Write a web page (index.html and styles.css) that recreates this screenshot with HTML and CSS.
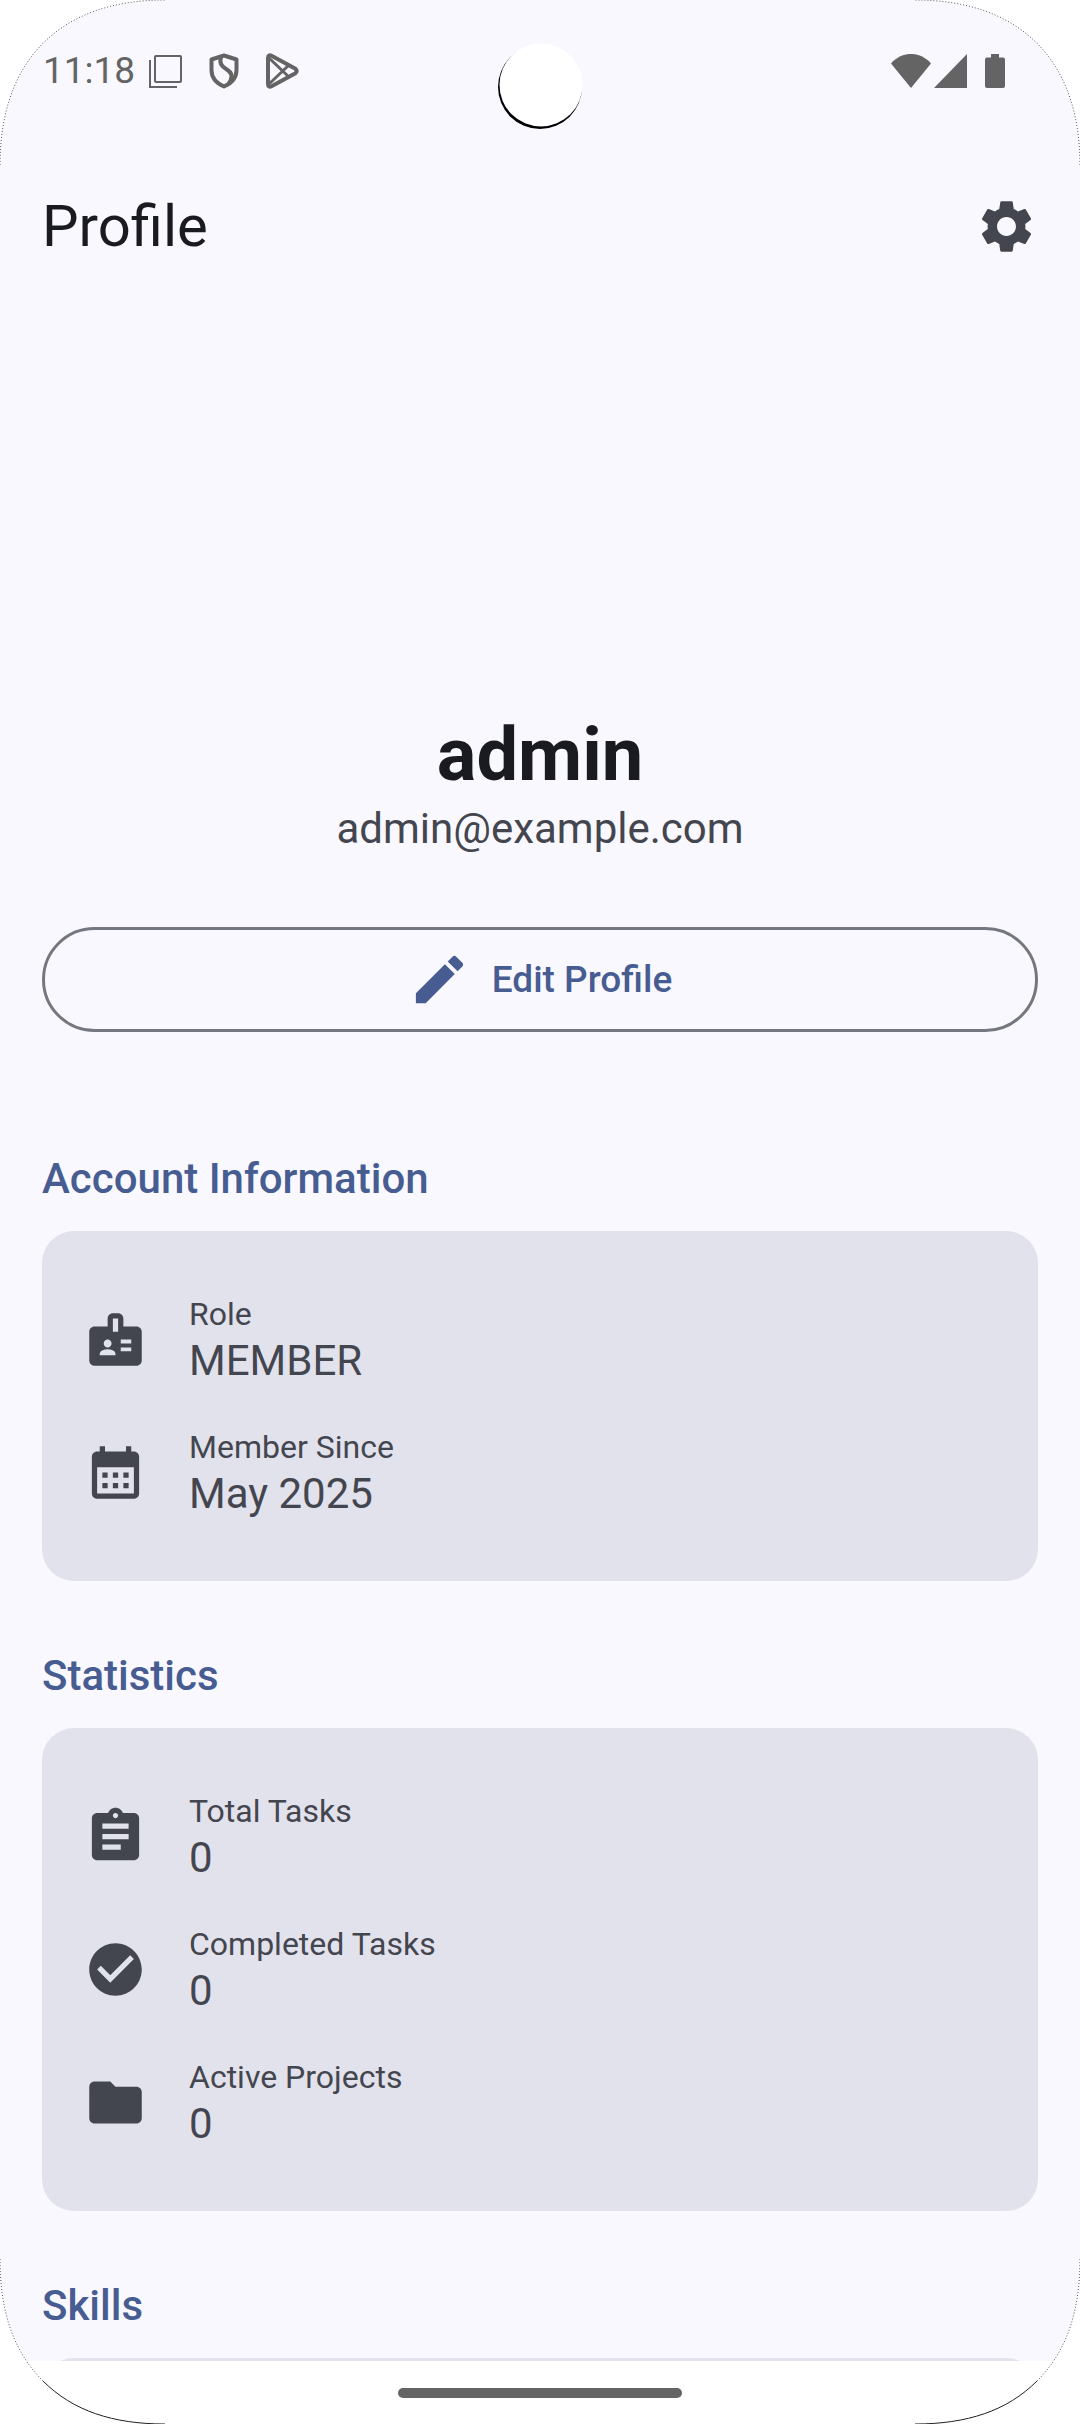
FILE: index.html
```html
<!DOCTYPE html>
<html lang="en">
<head>
<meta charset="utf-8">
<meta name="viewport" content="width=device-width, initial-scale=1">
<title>Profile</title>
<link rel="stylesheet" href="styles.css">
</head>
<body>
<div class="screen">
  <header class="status-bar">
    <div class="status-group">
      <time class="clock">11:18</time>
      <svg class="status-icon" viewBox="0 0 36 36" fill="none" stroke="currentColor" stroke-width="2"><rect x="7" y="3" width="26" height="26" rx="1"/><path d="M2 7V34H29"/></svg>
      <svg class="status-icon shield" viewBox="0 0 36 36" fill="none" stroke="currentColor" stroke-width="4" stroke-linejoin="round"><path d="M18 2.500L30.500 6.500V17C30.500 25 26 30 18 33.500C10 30 5.500 25 5.500 17V6.500Z"/><path d="M15 4C11 17 27 15 25.500 24C25 27 24 29 22.500 31"/></svg>
      <svg class="status-icon play" viewBox="0 0 36 36" fill="none" stroke="currentColor" stroke-width="4" stroke-linejoin="round"><path d="M4 5Q4 1 8 3L31 15.500Q34.500 18 31 20.500L8 33Q4 35 4 31Z"/><path stroke-width="3" d="M5 5L25 24M5 31L25 12"/></svg>
    </div>
    <div class="status-group">
      <svg class="wifi" viewBox="0 0 40 34" fill="currentColor"><path d="M0 9.500C11-3.200 29-3.200 40 9.500L20 34Z"/></svg>
      <svg class="signal" viewBox="0 0 33 34" fill="currentColor"><path d="M0 34L33 0V34Z"/></svg>
      <svg class="battery" viewBox="0 0 20 34" fill="currentColor"><path d="M6 0H14V3.500H18Q20 3.500 20 5.500V32Q20 34 18 34H2Q0 34 0 32V5.500Q0 3.500 2 3.500H6Z"/></svg>
    </div>
  </header>

  <div class="app-bar">
    <h1 class="title">Profile</h1>
    <button class="icon-button" type="button" aria-label="Settings">
      <svg class="icon" viewBox="0 0 24 24" fill="currentColor"><path d="M19.140 12.940c.04-.3.060-.61.060-.94 0-.32-.02-.64-.07-.94l2.030-1.580c.18-.14.230-.41.120-.61l-1.920-3.320c-.12-.22-.37-.29-.59-.22l-2.390.96c-.5-.38-1.030-.7-1.620-.94l-.36-2.540c-.04-.24-.24-.41-.48-.41h-3.840c-.24 0-.43.170-.47.410l-.36 2.540c-.59.240-1.130.570-1.620.940l-2.390-.96c-.22-.08-.47 0-.59.220L2.740 8.870c-.12.210-.08.470.120.610l2.030 1.580c-.05.300-.09.630-.09.940s.02.640.070.940l-2.030 1.580c-.18.140-.23.410-.12.610l1.920 3.320c.12.220.370.290.590.220l2.390-.96c.5.380 1.030.7 1.620.940l.36 2.540c.05.240.240.410.480.410h3.840c.24 0 .44-.17.470-.41l.36-2.540c.59-.24 1.130-.56 1.620-.94l2.390.96c.22.080.470 0 .59-.22l1.920-3.320c.12-.22.070-.47-.12-.61l-2.010-1.580zM12 15.600c-1.980 0-3.600-1.620-3.600-3.600s1.620-3.600 3.600-3.600 3.600 1.620 3.600 3.600-1.620 3.600-3.600 3.600z"/></svg>
    </button>
  </div>

  <main class="content">
    <div class="avatar" role="img" aria-label="Avatar"></div>
    <h2 class="name">admin</h2>
    <p class="email">admin@example.com</p>
    <button class="edit-button" type="button">
      <svg class="icon" viewBox="0 0 24 24" fill="currentColor"><path d="M3 17.250V21h3.750L17.810 9.940l-3.750-3.750L3 17.250zM20.710 7.040c.39-.39.390-1.020 0-1.410l-2.340-2.340c-.39-.39-1.020-.39-1.410 0l-1.830 1.830 3.750 3.750 1.830-1.830z"/></svg>
      Edit Profile
    </button>

    <section class="section">
      <h3 class="section-title">Account Information</h3>
      <dl class="card">
        <div class="row">
          <svg class="icon" viewBox="0 0 24 24" fill="currentColor"><path fill-rule="evenodd" d="M20 7h-5V4c0-1.100-.9-2-2-2h-2c-1.100 0-2 .9-2 2v3H4c-1.100 0-2 .9-2 2v11c0 1.100.9 2 2 2h16c1.100 0 2-.9 2-2V9c0-1.100-.9-2-2-2zM9 12c.83 0 1.500.67 1.500 1.500S9.830 15 9 15s-1.500-.67-1.500-1.500S8.170 12 9 12zM12 18H6v-.43c0-.6.360-1.150.920-1.390C7.560 15.900 8.260 15.750 9 15.750s1.440.15 2.080.43c.56.240.920.780.920 1.390V18zM13 9h-2V4h2v5zM18 16.500h-4V15h4v1.500zM18 13.500h-4V12h4v1.500z"/></svg>
          <div class="field"><dt class="label">Role</dt><dd class="value">MEMBER</dd></div>
        </div>
        <div class="row">
          <svg class="icon" viewBox="0 0 24 24" fill="currentColor"><path fill-rule="evenodd" d="M19 4h-1V2h-2v2H8V2H6v2H5c-1.110 0-2 .9-2 2v14c0 1.100.890 2 2 2h14c1.100 0 2-.9 2-2V6c0-1.100-.9-2-2-2zM19 20H5V10h14v10zM9 14H7v-2h2v2zM13 14h-2v-2h2v2zM17 14h-2v-2h2v2zM9 18H7v-2h2v2zM13 18h-2v-2h2v2zM17 18h-2v-2h2v2z"/></svg>
          <div class="field"><dt class="label">Member Since</dt><dd class="value">May 2025</dd></div>
        </div>
      </dl>
    </section>

    <section class="section">
      <h3 class="section-title">Statistics</h3>
      <dl class="card">
        <div class="row">
          <svg class="icon" viewBox="0 0 24 24" fill="currentColor"><path d="M19 3h-4.180C14.400 1.840 13.300 1 12 1c-1.300 0-2.400.84-2.820 2H5c-1.100 0-2 .9-2 2v14c0 1.100.9 2 2 2h14c1.100 0 2-.9 2-2V5c0-1.100-.9-2-2-2zm-7 0c.55 0 1 .45 1 1s-.45 1-1 1-1-.45-1-1 .45-1 1-1zm2 14H7v-2h7v2zm3-4H7v-2h10v2zm0-4H7V7h10v2z"/></svg>
          <div class="field"><dt class="label">Total Tasks</dt><dd class="value">0</dd></div>
        </div>
        <div class="row">
          <svg class="icon" viewBox="0 0 24 24" fill="currentColor"><path d="M12 2C6.480 2 2 6.480 2 12s4.480 10 10 10 10-4.480 10-10S17.520 2 12 2zm-2 15l-5-5 1.410-1.410L10 14.170l7.590-7.590L19 8l-9 9z"/></svg>
          <div class="field"><dt class="label">Completed Tasks</dt><dd class="value">0</dd></div>
        </div>
        <div class="row">
          <svg class="icon" viewBox="0 0 24 24" fill="currentColor"><path d="M10 4H4c-1.100 0-1.990.9-1.990 2L2 18c0 1.100.9 2 2 2h16c1.100 0 2-.9 2-2V8c0-1.100-.9-2-2-2h-8l-2-2z"/></svg>
          <div class="field"><dt class="label">Active Projects</dt><dd class="value">0</dd></div>
        </div>
      </dl>
    </section>

    <section class="section">
      <h3 class="section-title">Skills</h3>
      <div class="card"></div>
    </section>
  </main>

  <footer class="nav-bar"><span class="nav-handle"></span></footer>

  <svg class="camera" viewBox="0 0 88 88"><circle cx="43" cy="45" r="42" fill="#000"/><circle cx="44" cy="43" r="41.500" fill="#fff"/></svg>
  <svg class="corner top-left" viewBox="0 0 166 166"><path class="mask" d="M0 165C0 60 60 0 165 0H0Z"/><path class="edge dotted" d="M0 165C0 60 60 0 165 0"/></svg>
  <svg class="corner top-right" viewBox="0 0 166 166"><path class="mask" d="M0 165C0 60 60 0 165 0H0Z"/><path class="edge dotted" d="M0 165C0 60 60 0 165 0"/></svg>
  <svg class="corner bottom-left" viewBox="0 0 166 166"><path class="mask" d="M0 165C0 60 60 0 165 0H0Z"/><path class="edge" d="M43 43C73 13 113 0 165 0"/><path class="edge dotted" d="M0 165C0 113 13 73 43 43"/></svg>
  <svg class="corner bottom-right" viewBox="0 0 166 166"><path class="mask" d="M0 165C0 60 60 0 165 0H0Z"/><path class="edge" d="M43 43C73 13 113 0 165 0"/><path class="edge dotted" d="M0 165C0 113 13 73 43 43"/></svg>
</div>
</body>
</html>
```
FILE: styles.css
```css
* {
  box-sizing: border-box;
}

body,
h1,
h2,
h3,
p,
dl,
dd {
  margin: 0;
}

body {
  background: #fff;
  color: #44464f;
  font-family: Roboto, "Noto Sans", sans-serif;
}

button {
  background: none;
  border: 0;
  padding: 0;
  font: inherit;
  color: inherit;
  cursor: pointer;
}

svg {
  display: block;
  flex: none;
}

.screen {
  position: relative;
  display: flex;
  flex-direction: column;
  height: 100vh;
  overflow: hidden;
  background: #faf8ff;
}

/* System status bar */
.status-bar {
  display: flex;
  flex: none;
  align-items: center;
  justify-content: space-between;
  height: 142px;
  padding: 0 75px 0 43px;
  color: #646464;
}

.status-group {
  display: flex;
  align-items: center;
}

.clock {
  margin-right: 13px;
  font-size: 37px;
  line-height: 42px;
}

.status-icon {
  width: 36px;
  height: 36px;
}

.shield,
.play {
  margin-left: 22px;
}

.wifi {
  width: 40px;
  height: 34px;
}

.signal {
  width: 33px;
  height: 34px;
  margin: 0 18px 0 3px;
}

.battery {
  width: 20px;
  height: 34px;
}

/* App bar */
.app-bar {
  display: flex;
  flex: none;
  align-items: center;
  justify-content: space-between;
  height: 168px;
  padding: 0 42px;
}

.title {
  color: #1a1b21;
  font-size: 58px;
  font-weight: 400;
  line-height: 74px;
}

.icon {
  width: 63px;
  height: 63px;
}

/* Profile content */
.content {
  display: flex;
  flex: 1;
  flex-direction: column;
  min-height: 0;
  overflow: hidden;
  padding: 44px 42px 0;
}

.content > * {
  flex: none;
}

.avatar {
  height: 315px;
  margin-bottom: 44px;
}

.name {
  color: #1a1b21;
  font-size: 74px;
  font-weight: 700;
  line-height: 84px;
  text-align: center;
}

.email {
  margin-bottom: 67px;
  font-size: 42px;
  line-height: 63px;
  text-align: center;
}

.edit-button {
  display: flex;
  align-items: center;
  justify-content: center;
  gap: 21px;
  height: 105px;
  margin-bottom: 52px;
  border: 3px solid #757780;
  border-radius: 53px;
  color: #475d92;
  font-size: 37px;
  font-weight: 500;
}

.section {
  margin-top: 63px;
}

.section-title {
  margin-bottom: 21px;
  color: #475d92;
  font-size: 42px;
  font-weight: 500;
  line-height: 63px;
}

.card {
  min-height: 168px;
  padding: 42px;
  border-radius: 32px;
  background: #e2e2ec;
}

.row {
  display: flex;
  align-items: center;
  gap: 42px;
  height: 133px;
}

.field {
  padding-top: 12px;
}

.label {
  font-size: 32px;
  line-height: 30px;
}

.value {
  font-size: 42px;
  line-height: 63px;
}

/* Gesture navigation */
.nav-bar {
  display: flex;
  flex: none;
  align-items: center;
  justify-content: center;
  height: 63px;
  background: #fff;
}

.nav-handle {
  width: 284px;
  height: 10px;
  border-radius: 5px;
  background: #646464;
}

/* Display cutout and rounded screen corners */
.camera {
  position: absolute;
  top: 42px;
  left: 50%;
  width: 88px;
  height: 88px;
  margin-left: -43px;
}

.corner {
  position: absolute;
  width: 166px;
  height: 166px;
}

.top-left {
  top: 0;
  left: 0;
}

.top-right {
  top: 0;
  right: 0;
  transform: scaleX(-1);
}

.bottom-left {
  bottom: 0;
  left: 0;
  transform: scaleY(-1);
}

.bottom-right {
  right: 0;
  bottom: 0;
  transform: scale(-1);
}

.mask {
  fill: #fff;
}

.edge {
  fill: none;
  stroke: #222;
  stroke-width: 1;
}

.dotted {
  stroke: #555;
  stroke-dasharray: 1 2;
}
```
